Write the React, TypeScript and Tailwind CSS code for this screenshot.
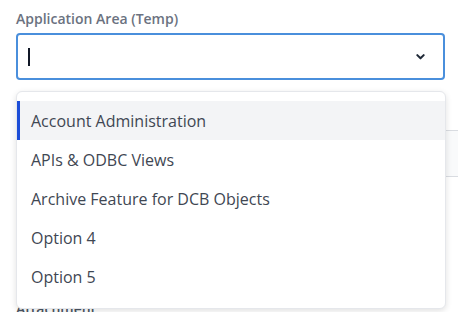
import React from "react";

const options = [
  "Account Administration",
  "APIs & ODBC Views",
  "Archive Feature for DCB Objects",
  "Option 4",
  "Option 5",
];

export default function App() {
  const active = 0;

  return (
    <div
      className="relative h-[312px] w-[458px] overflow-hidden bg-white pl-4"
      style={{ fontFamily: '"Open Sans", "Noto Sans", sans-serif' }}
    >
      {/* Application Area field */}
      <div className="pt-[9px]">
        <label className="block text-[14px] font-semibold leading-[19px] text-[#6b7280]">
          Application Area (Temp)
        </label>
        <div className="mt-[5px] flex h-[47px] w-[429px] items-center justify-between rounded-[4px] border-2 border-[#4a8fdc] bg-white pl-[10px] pr-[17px]">
          <span className="h-[18px] w-[2px] bg-[#111827]"></span>
          <svg className="h-[11px] w-[11px] text-[#1f2937]" viewBox="0 0 24 24" fill="none" stroke="currentColor" strokeWidth={4.5} strokeLinecap="round" strokeLinejoin="round">
            <path d="M5 9l7 7 7-7" />
          </svg>
        </div>
      </div>

      {/* Next field (behind the menu) */}
      <div className="mt-[50px] h-[47px] w-[460px] rounded-[4px] border border-[#d9dce1] bg-[#f9fafb]"></div>

      <div className="mt-[123px] text-[14px] font-semibold leading-[18px] text-[#4b5563]">
        Attachment
      </div>

      {/* Dropdown menu */}
      <div className="absolute left-4 top-[91px] w-[430px] rounded-[6px] border border-[#e5e7eb] bg-white pb-[12px] pt-[9px] shadow-[0_2px_6px_rgba(0,0,0,0.12)]">
        {options.map((opt, i) => (
          <div
            key={opt}
            className={`flex h-[39px] items-center border-l-[3px] pl-[11px] text-[16px] text-[#3f4753] ${
              i === active ? "border-[#1d4ed8] bg-[#f3f4f6]" : "border-transparent"
            }`}
          >
            {opt}
          </div>
        ))}
      </div>
    </div>
  );
}
